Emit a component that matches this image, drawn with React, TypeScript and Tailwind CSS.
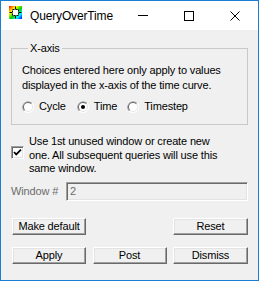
import React from 'react';

const FONT = { fontFamily: '"Liberation Sans", Arial, sans-serif' };

function AppIcon() {
  return (
    <svg width="13" height="13" viewBox="0 0 13 13">
      <defs>
        <linearGradient id="rb" x1="0" y1="0" x2="1" y2="1">
          <stop offset="0" stopColor="#ff0000" />
          <stop offset="0.3" stopColor="#ffff00" />
          <stop offset="0.55" stopColor="#00d000" />
          <stop offset="0.75" stopColor="#00ffff" />
          <stop offset="1" stopColor="#0000ff" />
        </linearGradient>
      </defs>
      <rect x="0" y="0" width="13" height="13" fill="url(#rb)" />
      <rect x="3.5" y="3.5" width="6" height="6" fill="#fff" stroke="#000" strokeWidth="1" strokeDasharray="2 1" />
      <path d="M6.5 0.5 V3 M6.5 10 V12.5 M0.5 6.5 H3 M10 6.5 H12.5" stroke="#000" strokeWidth="1" />
    </svg>
  );
}

function Radio({ checked }: { checked?: boolean }) {
  return (
    <svg width="12" height="12" viewBox="0 0 12 12" className="shrink-0">
      <circle cx="6" cy="6" r="6" fill="#ffffff" />
      <path d="M1.76 10.24 A6 6 0 0 1 10.24 1.76 Z" fill="#a0a0a0" />
      <circle cx="6" cy="6" r="5" fill="#e3e3e3" />
      <path d="M2.46 9.54 A5 5 0 0 1 9.54 2.46 Z" fill="#696969" />
      <circle cx="6" cy="6" r="4" fill="#ffffff" />
      {checked && <circle cx="6" cy="6" r="2" fill="#000" />}
    </svg>
  );
}

function Checkbox({ checked }: { checked?: boolean }) {
  return (
    <span className="w-[13px] h-[13px] shrink-0 bg-white border border-t-[#a0a0a0] border-l-[#a0a0a0] border-r-white border-b-white shadow-[inset_1px_1px_0_#696969,inset_-1px_-1px_0_#e3e3e3] flex items-center justify-center">
      {checked && (
        <svg width="9" height="9" viewBox="0 0 9 9">
          <path d="M1 4 L3.2 6.4 L8 1.6" fill="none" stroke="#000" strokeWidth="1.7" />
        </svg>
      )}
    </span>
  );
}

function Button({ label, w }: { label: string; w: string }) {
  return (
    <button
      className={`${w} h-[17px] bg-[#f0f0f0] border border-t-white border-l-white border-r-[#696969] border-b-[#696969] shadow-[inset_-1px_-1px_0_#a0a0a0,inset_1px_1px_0_#e3e3e3] text-[11px] leading-none tracking-[-0.15px] text-black flex items-center justify-center`}
      style={FONT}
    >
      {label}
    </button>
  );
}

export default function App() {
  return (
    <div className="w-[259px] h-[281px] border border-[#1a7fd3] bg-[#f0f0f0] flex flex-col text-black" style={FONT}>
      {/* Title bar */}
      <div className="h-[29px] bg-white flex items-center shrink-0">
        <span className="ml-[8px] self-start mt-[5px]"><AppIcon /></span>
        <span className="ml-[8px] text-[12px] tracking-[-0.15px] mt-[1px]">QueryOverTime</span>
        <div className="flex-1" />
        <div className="w-[46px] h-full flex items-center justify-center">
          <span className="w-[10px] h-px bg-black" />
        </div>
        <div className="w-[46px] h-full flex items-center justify-center">
          <span className="w-[10px] h-[10px] border border-black" />
        </div>
        <div className="w-[46px] h-full flex items-center justify-center">
          <svg width="10" height="10" viewBox="0 0 10 10">
            <path d="M0.5 0.5 L9.5 9.5 M9.5 0.5 L0.5 9.5" stroke="#000" strokeWidth="1" />
          </svg>
        </div>
      </div>

      {/* Body */}
      <div className="flex flex-col px-[10px] text-[11px] tracking-[-0.15px]">
        <fieldset className="mt-[11px] border border-[#c8c8c8] px-[10px] pb-[10px]">
          <legend className="ml-[6px] px-[2px] leading-[14px]">X-axis</legend>
          <p className="pt-[8px] leading-[15px] whitespace-nowrap">
            Choices entered here only apply to values
            <br />
            displayed in the x-axis of the time curve.
          </p>
          <div className="mt-[6px] h-[15px] flex items-center">
            <span className="flex items-center gap-[5px]"><Radio /><span>Cycle</span></span>
            <span className="ml-[11px] flex items-center gap-[5px]"><Radio checked /><span>Time</span></span>
            <span className="ml-[10px] flex items-center gap-[5px]"><Radio /><span>Timestep</span></span>
          </div>
        </fieldset>

        <div className="mt-[10px] flex items-start">
          <span className="mt-[11px]"><Checkbox checked /></span>
          <p className="ml-[5px] leading-[13.5px] whitespace-nowrap">
            Use 1st unused window or create new
            <br />
            one. All subsequent queries will use this
            <br />
            same window.
          </p>
        </div>

        <div className="mt-[6.5px] flex items-center">
          <span className="w-[55px] text-[#6d6d6d]">Window #</span>
          <div className="flex-1 h-[19px] bg-[#f0f0f0] border border-t-[#a0a0a0] border-l-[#a0a0a0] border-r-white border-b-white shadow-[inset_1px_1px_0_#696969,inset_-1px_-1px_0_#e3e3e3] flex items-center pl-[3px] text-[#6d6d6d]">
            2
          </div>
        </div>

        <div className="mt-[17px] pl-[1px] flex justify-between">
          <Button label="Make default" w="w-[74px]" />
          <Button label="Reset" w="w-[75px]" />
        </div>
        <div className="mt-[12px] pl-[1px] flex justify-between">
          <Button label="Apply" w="w-[74px]" />
          <Button label="Post" w="w-[74px]" />
          <Button label="Dismiss" w="w-[75px]" />
        </div>
      </div>
    </div>
  );
}
